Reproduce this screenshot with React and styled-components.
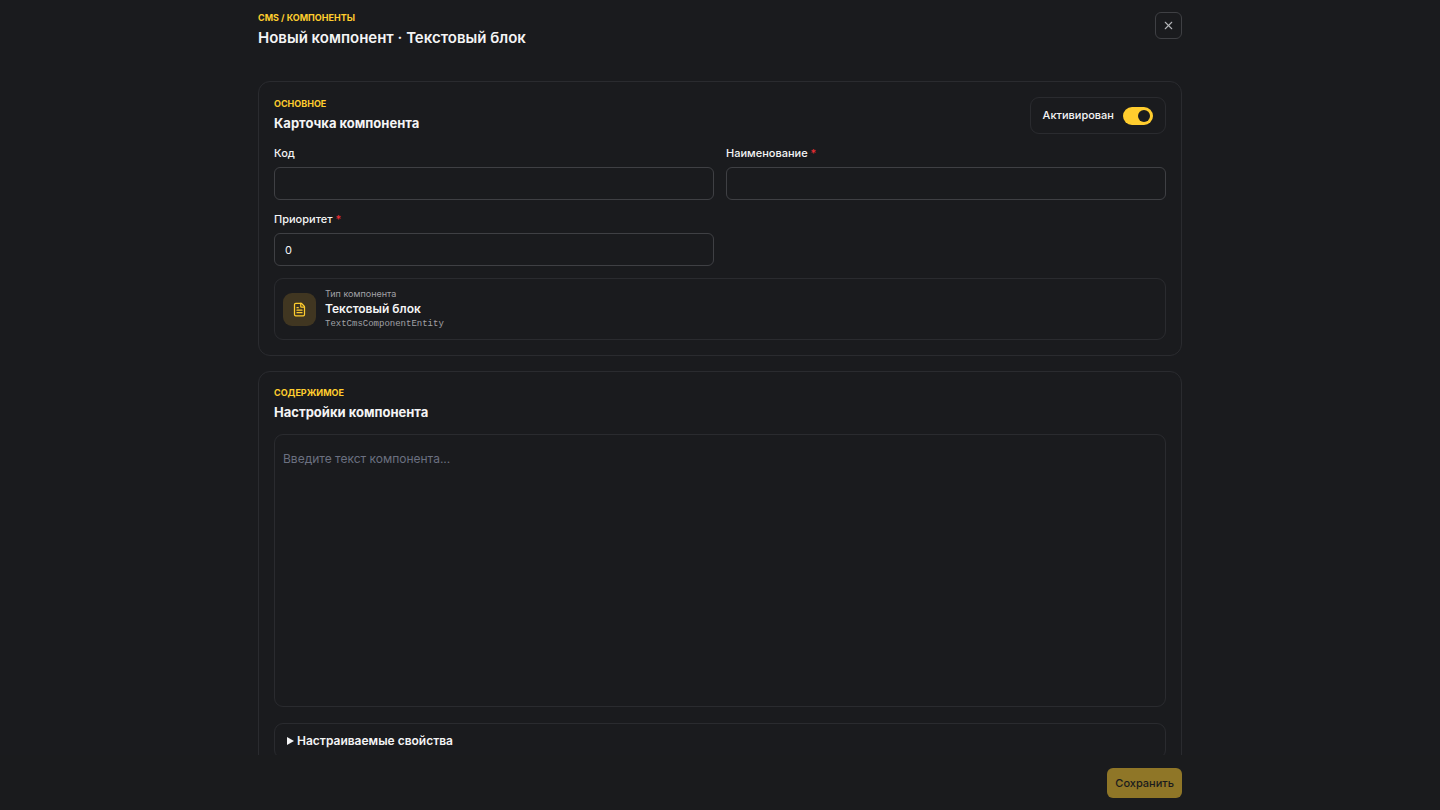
import React, { useState } from 'react';
import styled, { createGlobalStyle } from 'styled-components';
import { FileText, X } from 'lucide-react';

const GlobalStyle = createGlobalStyle`
  *, *::before, *::after {
    box-sizing: border-box;
  }

  body {
    margin: 0;
    background: #1a1b1e;
    color: #f4f4f5;
    font: 11px/15px Inter, sans-serif;
  }

  button, input, textarea {
    font: inherit;
    color: inherit;
  }

  h1, h2, p {
    margin: 0;
  }
`;

const Page = styled.div`
  display: flex;
  flex-direction: column;
  height: 100vh;
`;

const Container = styled.div`
  width: 100%;
  max-width: 956px;
  margin: 0 auto;
  padding: 0 16px;
`;

const Header = styled(Container)`
  display: flex;
  justify-content: space-between;
  align-items: flex-start;
  padding-top: 12px;
  padding-bottom: 16px;
`;

const Scroll = styled.main`
  flex: 1;
  min-height: 0;
  overflow-y: auto;
  scrollbar-width: none;
`;

const Cards = styled(Container)`
  display: flex;
  flex-direction: column;
  gap: 15px;
  padding-top: 16px;
  padding-bottom: 16px;
`;

const Footer = styled.footer`
  background: #1a1b1d;
`;

const Actions = styled(Container)`
  display: flex;
  justify-content: flex-end;
  padding-top: 13px;
  padding-bottom: 12px;
`;

const Eyebrow = styled.p`
  color: #ffcd2e;
  font-size: 9px;
  font-weight: 700;
  line-height: 11px;
  text-transform: uppercase;
`;

const Title = styled.h1`
  margin-top: 4px;
  font-size: 15px;
  font-weight: 600;
  line-height: 22px;
`;

const CloseButton = styled.button`
  display: grid;
  place-items: center;
  width: 27px;
  height: 27px;
  padding: 0;
  border: 1px solid #3f4044;
  border-radius: 6px;
  background: none;
  color: #b4b5b9;
  cursor: pointer;
`;

const Card = styled.section`
  padding: 15px;
  border: 1px solid #2a2b2f;
  border-radius: 12px;
`;

const CardHeader = styled.div`
  display: flex;
  justify-content: space-between;
  align-items: center;
  margin-bottom: 12px;
`;

const CardTitle = styled.h2`
  margin-top: 4px;
  font-size: 13px;
  font-weight: 700;
  line-height: 20px;
`;

const SwitchBox = styled.label`
  display: flex;
  align-items: center;
  gap: 9px;
  height: 37px;
  padding: 0 12px;
  border: 1px solid #2a2b2f;
  border-radius: 9px;
  font-weight: 500;
`;

const Switch = styled.input`
  appearance: none;
  display: flex;
  align-items: center;
  width: 30px;
  height: 18px;
  margin: 0;
  padding: 0 3px;
  border-radius: 9px;
  background: #4a4b50;
  cursor: pointer;

  &::before {
    content: '';
    width: 12px;
    height: 12px;
    border-radius: 50%;
    background: #1a1b1e;
  }

  &:checked {
    justify-content: flex-end;
    background: #ffcd2e;
  }
`;

const Fields = styled.div`
  display: grid;
  grid-template-columns: 1fr 1fr;
  gap: 12px;
  margin-bottom: 12px;
`;

const FieldLabel = styled.label`
  display: block;
  margin-bottom: 6px;
  font-weight: 500;
`;

const Required = styled.span`
  color: #f02d34;
`;

const Input = styled.input`
  display: block;
  width: 100%;
  height: 33px;
  padding: 0 10px;
  border: 1px solid #3f4044;
  border-radius: 6px;
  background: none;
`;

const TypeBox = styled.div`
  display: flex;
  align-items: center;
  gap: 9px;
  padding: 8px;
  border: 1px solid #2a2b2f;
  border-radius: 9px;
`;

const TypeIcon = styled.div`
  display: grid;
  place-items: center;
  width: 33px;
  height: 33px;
  border-radius: 9px;
  background: #403621;
  color: #ffcd2e;
`;

const TypeCaption = styled.p`
  color: #a1a1a6;
  font-size: 9px;
  line-height: 14px;
`;

const TypeName = styled.p`
  font-size: 12px;
  font-weight: 600;
  line-height: 16px;
`;

const TypeCode = styled.code`
  display: block;
  color: #a1a1a6;
  font: 9px/14px "Liberation Mono", monospace;
`;

const TextArea = styled.textarea`
  display: block;
  width: 100%;
  height: 273px;
  padding: 13px 8px;
  border: 1px solid #2a2b2f;
  border-radius: 9px;
  background: none;
  font-size: 12px;
  line-height: 22px;
  resize: none;

  &::placeholder {
    color: #6b7080;
    opacity: 1;
  }
`;

const Details = styled.details`
  margin-top: 16px;
  padding: 8px 12px;
  border: 1px solid #2a2b2f;
  border-radius: 9px;
`;

const Summary = styled.summary`
  display: flex;
  align-items: center;
  gap: 3px;
  font-size: 12px;
  font-weight: 600;
  line-height: 18px;
  list-style: none;
  cursor: pointer;

  &::before {
    content: '';
    border-top: 4px solid transparent;
    border-bottom: 4px solid transparent;
    border-left: 7px solid currentColor;
  }

  details[open] > &::before {
    transform: rotate(90deg);
  }
`;

const SaveButton = styled.button`
  height: 30px;
  padding: 0 8px;
  border: 0;
  border-radius: 6px;
  background: #8f7627;
  color: #1a1b1d;
  font-weight: 500;
`;

const Field = ({ id, title, required, ...rest }) => (
  <div>
    <FieldLabel htmlFor={id}>
      {title} {required && <Required>*</Required>}
    </FieldLabel>
    <Input id={id} required={required} {...rest} />
  </div>
);

const App = () => {
  const [active, setActive] = useState(true);

  return (
    <Page>
      <GlobalStyle />
      <Header as="header">
        <div>
          <Eyebrow>CMS / Компоненты</Eyebrow>
          <Title>Новый компонент · Текстовый блок</Title>
        </div>
        <CloseButton type="button" aria-label="Закрыть">
          <X size={13} strokeWidth={2} />
        </CloseButton>
      </Header>

      <Scroll>
        <Cards>
          <Card>
            <CardHeader>
              <div>
                <Eyebrow>Основное</Eyebrow>
                <CardTitle>Карточка компонента</CardTitle>
              </div>
              <SwitchBox>
                Активирован
                <Switch
                  type="checkbox"
                  role="switch"
                  checked={active}
                  onChange={e => setActive(e.target.checked)}
                />
              </SwitchBox>
            </CardHeader>
            <Fields>
              <Field id="code" title="Код" />
              <Field id="name" title="Наименование" required />
              <Field id="priority" title="Приоритет" required inputMode="numeric" defaultValue="0" />
            </Fields>
            <TypeBox>
              <TypeIcon>
                <FileText size={15} />
              </TypeIcon>
              <div>
                <TypeCaption>Тип компонента</TypeCaption>
                <TypeName>Текстовый блок</TypeName>
                <TypeCode>TextCmsComponentEntity</TypeCode>
              </div>
            </TypeBox>
          </Card>

          <Card>
            <CardHeader>
              <div>
                <Eyebrow>Содержимое</Eyebrow>
                <CardTitle>Настройки компонента</CardTitle>
              </div>
            </CardHeader>
            <TextArea aria-label="Текст компонента" placeholder="Введите текст компонента..." />
            <Details>
              <Summary>Настраиваемые свойства</Summary>
            </Details>
          </Card>
        </Cards>
      </Scroll>

      <Footer>
        <Actions>
          <SaveButton type="button" disabled>Сохранить</SaveButton>
        </Actions>
      </Footer>
    </Page>
  );
};

export default App;
